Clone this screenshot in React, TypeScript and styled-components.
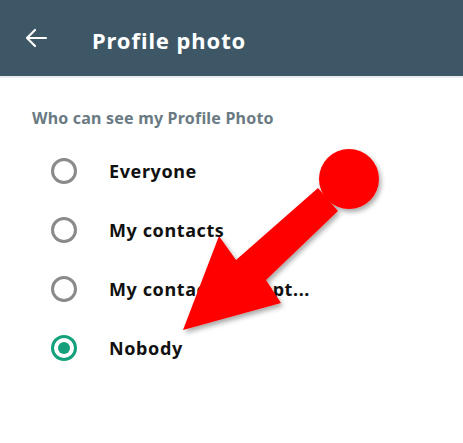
import React from "react";
import styled, { createGlobalStyle } from "styled-components";

const GlobalStyle = createGlobalStyle`
  html, body { margin: 0; padding: 0; background: #ffffff; }
  body { font-family: "Noto Sans", "Open Sans", sans-serif; }
`;

const Screen = styled.div`
  position: relative;
  width: 463px;
  height: 443px;
  overflow: hidden;
  background: #ffffff;
`;

const Toolbar = styled.div`
  height: 76px;
  background: #3d5766;
  border-bottom: 2px solid #e8ecee;
  display: flex;
  align-items: center;
  padding-left: 24px;
  gap: 44px;
`;

const BackButton = styled.div`
  width: 24px;
  height: 24px;
  display: flex;
  align-items: center;
  justify-content: center;
`;

const Title = styled.div`
  color: #ffffff;
  font-size: 22px;
  font-weight: 700;
  letter-spacing: 0.9px;
  margin-top: 3px;
`;

const Section = styled.div`
  padding: 29px 0 0 32px;
`;

const SectionLabel = styled.div`
  color: #6a7a83;
  font-size: 16px;
  font-weight: 700;
  letter-spacing: 0.2px;
  margin-bottom: 12px;
`;

const Options = styled.div`
  display: flex;
  flex-direction: column;
`;

const Option = styled.div`
  height: 59px;
  display: flex;
  align-items: center;
  padding-left: 19px;
  gap: 32px;
`;

const Radio = styled.div<{ $checked?: boolean }>`
  width: 20px;
  height: 20px;
  border-radius: 50%;
  border: 3px solid ${(p) => (p.$checked ? "#14a07a" : "#8a8a8a")};
  display: flex;
  align-items: center;
  justify-content: center;
  flex-shrink: 0;
`;

const RadioDot = styled.div`
  width: 12px;
  height: 12px;
  border-radius: 50%;
  background: #14a07a;
`;

const OptionLabel = styled.div`
  color: #111111;
  font-size: 18px;
  font-weight: 700;
  letter-spacing: 0.6px;
`;

const Pointer = styled.svg`
  position: absolute;
  left: 0;
  top: 0;
  pointer-events: none;
`;

const options = [
  { label: "Everyone", checked: false },
  { label: "My contacts", checked: false },
  { label: "My contacts except...", checked: false },
  { label: "Nobody", checked: true },
];

const App: React.FC = () => {
  return (
    <Screen>
      <GlobalStyle />
      <Toolbar>
        <BackButton>
          <svg width="24" height="24" viewBox="0 0 24 24">
            <path
              d="M22 12H3M11 4l-8 8 8 8"
              fill="none"
              stroke="#ffffff"
              strokeWidth="2.2"
              strokeLinecap="round"
              strokeLinejoin="round"
            />
          </svg>
        </BackButton>
        <Title>Profile photo</Title>
      </Toolbar>
      <Section>
        <SectionLabel>Who can see my Profile Photo</SectionLabel>
        <Options>
          {options.map((o) => (
            <Option key={o.label}>
              <Radio $checked={o.checked}>{o.checked && <RadioDot />}</Radio>
              <OptionLabel>{o.label}</OptionLabel>
            </Option>
          ))}
        </Options>
      </Section>
      <Pointer width="463" height="443" viewBox="0 0 463 443">
        <defs>
          <filter id="shade" x="-20%" y="-20%" width="140%" height="140%">
            <feDropShadow dx="2" dy="3" stdDeviation="2.5" floodColor="#000" floodOpacity="0.35" />
          </filter>
        </defs>
        <g fill="#ff0000" filter="url(#shade)">
          <circle cx="349" cy="179" r="30" />
          <polygon points="318,188 338,211 266,280 281,303 183,330 219,236 236,260" />
        </g>
      </Pointer>
    </Screen>
  );
};

export default App;
